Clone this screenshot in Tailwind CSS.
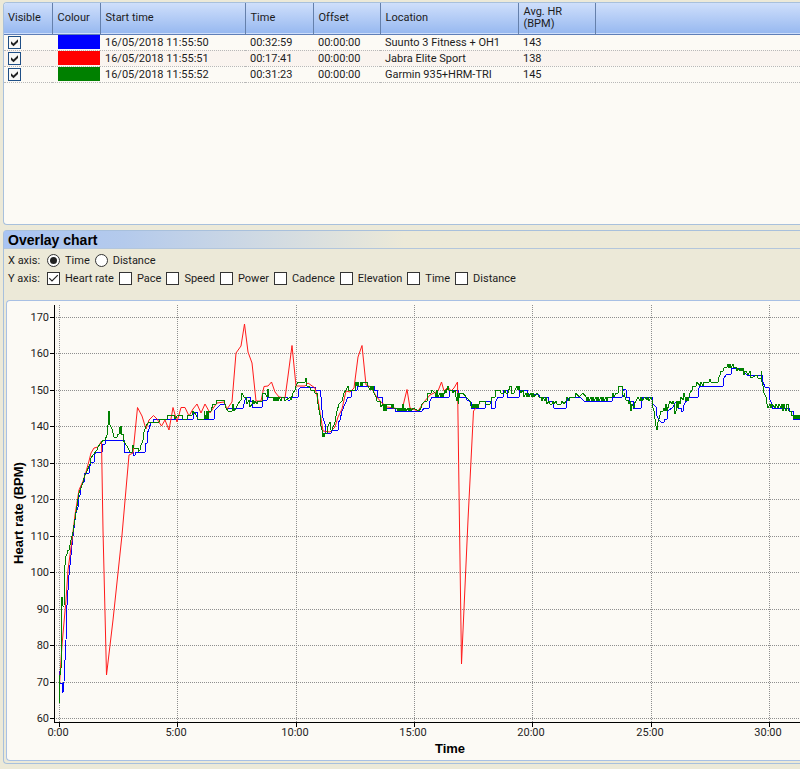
<!DOCTYPE html>
<html lang="en">
<head>
<meta charset="utf-8">
<title>Overlay chart</title>
<script src="https://cdn.jsdelivr.net/npm/@tailwindcss/browser@4"></script>
</head>
<body class="bg-[#ece9d8] font-['Roboto','Liberation_Sans',sans-serif] text-[11px] leading-3 text-[#1c1c1c]">
<main class="flex flex-col gap-[5px] pl-[3px] pt-[2px] min-h-screen overflow-hidden">

  <section class="h-[223px] rounded-l border border-r-0 border-[#a8c0dc] bg-[#fcfaf5] overflow-hidden">
    <table class="w-full table-fixed border-collapse text-left">
      <colgroup>
        <col class="w-[48px]"><col class="w-[48px]"><col class="w-[145px]"><col class="w-[68px]"><col class="w-[67px]"><col class="w-[138px]"><col class="w-[77px]"><col>
      </colgroup>
      <thead>
        <tr class="h-[31px] bg-linear-to-b from-[#cfdffb] to-[#98b9f0] border-b border-[#5f7fb8]">
          <th scope="col" class="border-r border-[#6580ab] pl-1 font-normal">Visible</th>
          <th scope="col" class="border-r border-[#6580ab] pl-[5px] font-normal">Colour</th>
          <th scope="col" class="border-r border-[#6580ab] pl-[5px] font-normal">Start time</th>
          <th scope="col" class="border-r border-[#6580ab] pl-[5px] font-normal">Time</th>
          <th scope="col" class="border-r border-[#6580ab] pl-[5px] font-normal">Offset</th>
          <th scope="col" class="border-r border-[#6580ab] pl-[5px] font-normal">Location</th>
          <th scope="col" class="border-r border-[#6580ab] pl-[5px] font-normal">Avg. HR<br>(BPM)</th>
          <th class="p-0"></th>
        </tr>
      </thead>
      <tbody id="rows"></tbody>
    </table>
  </section>

  <section class="rounded-l border border-r-0 border-[#a8c0dc] bg-[#ece9d8] pb-[2px] mb-[5px]">
    <h2 class="h-[18px] pl-1 border-b border-[#b3c6dc] bg-linear-to-r from-[#a9c4f3] from-0% via-[#b4caec] via-[120px] to-[#ece9d8] to-[400px] font-['Liberation_Sans',sans-serif] text-[14px] leading-[18px] font-bold text-black">Overlay chart</h2>
    <form class="h-[51px] pt-[5px] pl-1 flex flex-col gap-[5px]">
      <div role="radiogroup" aria-label="X axis" class="flex h-[13px] items-center">
        <span class="w-[39px]">X axis:</span>
        <div id="xaxis" class="flex gap-[5px]"></div>
      </div>
      <div role="group" aria-label="Y axis" class="flex h-[13px] items-center">
        <span class="w-[39px]">Y axis:</span>
        <div id="yaxis" class="flex gap-[5px]"></div>
      </div>
    </form>
    <div class="ml-[2px] rounded-l border border-r-0 border-[#a8c0e4] bg-[#fcfaf5] overflow-hidden">
      <svg id="chart" class="block w-full h-[459px]" viewBox="7 301 793 459" preserveAspectRatio="xMinYMin slice" role="img" aria-label="Heart rate over time">
        <g id="grid" stroke="#8e8e8e" stroke-dasharray="1 1" shape-rendering="crispEdges"></g>
        <g id="ticks" stroke="#000" shape-rendering="crispEdges"></g>
        <g fill="none" stroke-width="1" stroke-linejoin="round">
          <polyline stroke="#0000ff" shape-rendering="crispEdges" points="59,671 60,683 62,683 62,692 63,692 64,682 65,660 66,640 67,605 69,575 72,545 74,528 76,513 78,507 78,498 80,495 80,490 82,484 84,482 85,473 89,473 89,469 91,462 94,462 94,455 96,452 102,452 103,444 105,444 105,440 124,440 124,452 133,452 133,455 135,455 135,452 145,452 145,443 147,443 147,434 149,429 151,422 153,422 153,419 193,419 193,412 197,412 197,419 214,419 214,411 217,408 221,404 225,404 226,408 243,408 245,400 247,397 250,397 250,401 252,401 252,407 262,407 262,400 267,400 267,397 287,397 288,400 290,400 290,397 298,397 298,390 301,387 315,387 316,390 320,390 321,397 322,410 323,418 325,424 326,433 331,433 331,430 338,430 338,423 340,420 342,411 345,404 348,397 351,397 352,390 357,390 357,386 374,386 374,390 377,390 377,397 382,397 382,404 386,404 386,408 395,408 395,411 422,411 424,408 429,408 430,401 432,397 449,397 450,390 458,390 459,397 466,397 467,400 471,402 471,408 485,408 486,401 491,401 491,408 495,408 496,401 498,397 503,397 503,390 507,390 507,397 519,397 519,390 527,390 528,394 538,394 540,397 548,397 549,401 553,401 553,405 554,408 566,408 567,401 570,397 580,397 584,401 612,401 613,397 622,397 622,393 624,389 626,390 626,397 629,397 630,401 633,401 633,408 641,408 641,401 643,397 652,397 653,404 656,407 656,414 659,420 661,422 664,422 665,419 667,419 668,411 673,407 675,403 677,402 678,408 681,408 681,411 683,411 684,405 687,400 690,397 698,397 699,388 700,386 723,386 724,378 727,374 731,374 731,368 742,368 744,372 747,375 762,375 763,382 765,387 769,388 770,400 772,404 772,408 789,408 790,411 793,411 793,419 800,419"/>
          <polyline stroke="#ff1a1a" points="59.5,684 60.5,668 62,645 66,600 68,570 72,540 75,515 79,490 83,481 86,472 89,461 91,453 94,448 98,447 101.5,441 103,530 106.5,675 113,620 122,535 129,455 133,453 137.5,407.5 142,416 146,429 149,420 153.5,415.5 157,419 161.5,426 165,420 169,430 173,407.5 177,422 181,407.5 185,407.5 189,416 193,409 197,404 201,413 205,404 210,413 214,407 217,403 224,402 227,409 232,402 236,353 241,346 244.5,324 248,352 252,363 256,401 261,401 264,386.5 268,386 271.5,382 275,392 279,397 285,398 288,376 292,345.5 296,386 305,386 308,383 315,388 318,400 323,431 330,432 335,427 338,417 342,409 346,391 350,392 354,388 358,357 362,345.5 366,385 371,387 376,396 381,402 387,407 394,408 402,410 407,389.5 410,408 418,411 424,402 430,395 438,391 441.5,382 444,391 448,387 451,391 454,388 457.5,382 459,490 461.5,664 468,520 473.5,411 476,408 480,403"/>
          <polyline stroke="#008000" shape-rendering="crispEdges" points="59,704 60,675 61,668 61,610 62,597 63,606 64,606 65,565 65,558 67,554 67,550 69,550 71,540 73,532 76,512 79,493 82,485 85,475 86,473 90,464 90,460 93,455 97,450 98,447 101,443 103,440 105,440 107,435 108,425 109,411 110,425 112,429 114,437 117,437 118,434 119,434 119,427 120,434 121,426 121,434 123,434 123,440 125,443 128,448 130,452 132,452 132,448 133,445 134,448 138,448 138,452 140,450 140,448 143,440 144,432 146,426 149,422 159,422 160,419 167,419 168,415 174,415 175,419 178,415 182,415 183,419 187,419 187,415 192,415 193,411 196,415 198,419 204,419 204,411 206,419 207,411 208,419 209,411 211,411 213,404 216,404 217,400 224,400 226,408 228,411 232,411 233,404 234,411 236,408 238,404 241,400 242,393 244,397 246,397 247,404 249,400 250,407 252,404 253,400 254,404 255,401 257,404 258,401 262,401 263,393 265,393 267,397 268,389 269,397 273,397 274,401 275,397 276,401 277,397 278,401 279,397 281,401 282,397 284,397 285,401 290,397 291,400 293,393 295,390 296,386 298,382 305,382 306,378 307,386 309,386 311,390 314,390 315,393 317,393 318,404 320,415 321,426 322,430 323,437 324,433 324,437 325,433 327,433 328,426 330,422 331,430 332,430 335,422 337,411 339,404 342,401 344,393 346,390 348,386 348,390 355,390 356,382 357,386 358,382 359,386 360,386 361,382 362,386 363,382 367,382 368,386 370,390 371,386 372,390 373,386 374,393 376,397 377,401 380,401 381,407 383,404 384,411 385,404 386,411 386,404 391,404 392,408 393,404 394,408 397,408 398,411 399,408 400,411 401,408 402,411 403,404 404,411 405,408 406,411 408,408 409,411 410,408 411,411 413,408 419,411 421,408 422,404 425,401 427,401 428,393 431,393 432,390 435,393 436,397 437,390 438,397 440,393 441,397 442,393 443,397 445,390 446,393 448,386 449,390 452,390 453,393 455,390 456,397 457,401 458,393 458,404 460,393 463,393 466,397 470,401 470,404 472,408 473,404 474,408 475,404 476,408 477,404 478,408 479,404 480,401 485,401 486,404 490,404 491,401 492,397 495,397 496,390 500,390 501,393 504,393 505,390 506,393 508,393 510,386 511,386 511,393 514,393 515,390 517,386 518,390 519,386 520,390 521,393 523,390 524,397 526,393 527,397 528,393 529,397 531,393 532,397 533,393 534,397 537,393 539,397 541,397 542,401 543,397 545,401 546,397 547,404 549,401 550,404 552,404 553,401 554,404 556,401 557,404 561,404 562,401 564,404 566,401 567,397 569,401 570,397 575,397 576,393 579,397 583,393 586,397 587,401 588,397 589,401 591,397 592,401 593,397 594,401 596,397 597,401 598,397 599,401 601,397 602,401 603,397 604,401 606,397 607,401 608,397 612,397 613,393 614,397 616,393 618,393 618,390 619,386 622,386 622,393 624,397 624,393 626,400 628,400 629,404 630,401 631,411 632,404 634,408 634,404 636,401 638,397 640,401 641,397 642,401 645,397 647,400 648,397 649,401 651,397 652,400 653,408 654,411 655,419 656,426 657,430 658,422 659,419 660,415 661,411 663,411 664,408 665,411 666,404 667,411 669,404 670,401 672,404 673,401 674,404 675,414 676,411 677,401 678,408 679,401 680,404 681,397 683,400 684,393 686,401 687,397 688,401 689,397 690,393 692,390 693,386 696,386 697,382 700,386 701,382 703,386 704,382 709,382 710,379 711,382 718,382 718,379 720,375 721,371 723,371 724,368 727,367 728,364 729,368 730,364 731,368 733,364 734,368 736,367 737,371 738,368 740,371 741,368 742,371 743,368 744,375 745,371 746,371 748,375 750,371 751,378 757,375 758,378 761,378 761,371 762,382 763,386 764,393 766,397 767,404 768,408 770,404 771,408 772,404 775,408 776,404 778,408 779,404 781,408 782,404 783,411 784,404 785,408 786,411 787,404 788,404 789,411 791,411 791,415 793,415 794,419 795,415 796,419 797,415 798,419 799,415 800,419"/>
        </g>
        <g id="axis-labels" fill="#1c1c1c" font-size="11"></g>
        <g class="font-['Liberation_Sans',sans-serif] font-bold" font-size="13" fill="#000">
          <text text-anchor="middle" x="450" y="753">Time</text>
          <text text-anchor="middle" transform="translate(23 513) rotate(-90)">Heart rate (BPM)</text>
        </g>
      </svg>
    </div>
  </section>
</main>

<script>
const records = [
  ["#0000ff", "16/05/2018 11:55:50", "00:32:59", "00:00:00", "Suunto 3 Fitness + OH1", "143"],
  ["#ff0000", "16/05/2018 11:55:51", "00:17:41", "00:00:00", "Jabra Elite Sport", "138"],
  ["#008000", "16/05/2018 11:55:52", "00:31:23", "00:00:00", "Garmin 935+HRM-TRI", "145"]
];
document.getElementById("rows").innerHTML = records.map(([colour, ...cells]) => `
  <tr class="h-4 leading-[15px] border-b border-dotted border-[#b8b8b8] even:bg-[#faf4ef]">
    <td class="p-0 pl-1"><span class="grid size-[13px] place-items-center">
      <input type="checkbox" checked aria-label="Show ${cells[3]}" class="col-start-1 row-start-1 size-[13px] appearance-none border border-[#1f4f86] bg-[#f8f8f6]">
      <svg class="col-start-1 row-start-1 size-[9px] pointer-events-none" viewBox="0 0 9 9"><path d="M1 3.2 3.5 5.6 8 1.2V4L3.5 8.3 1 5.9z" fill="#222"/></svg>
    </span></td>
    <td class="p-0 pl-[6px]"><div class="h-[14px]" style="background:${colour}"></div></td>
    ${cells.map(c => `<td class="p-0 pl-[5px] whitespace-nowrap">${c}</td>`).join("")}
    <td class="p-0"></td>
  </tr>`).join("");

document.getElementById("xaxis").innerHTML = ["Time", "Distance"].map((name, i) => `
  <label class="flex items-center gap-[5px]"><span class="grid size-[13px] place-items-center">
    <input type="radio" name="x" ${i ? "" : "checked"} class="peer col-start-1 row-start-1 size-[13px] appearance-none rounded-full border border-[#333] bg-white">
    <span class="col-start-1 row-start-1 size-[7px] rounded-full bg-[#222] invisible peer-checked:visible pointer-events-none"></span>
  </span>${name}</label>`).join("");

document.getElementById("yaxis").innerHTML = ["Heart rate", "Pace", "Speed", "Power", "Cadence", "Elevation", "Time", "Distance"].map((name, i) => `
  <label class="flex items-center gap-[5px]"><span class="grid size-[13px] place-items-center">
    <input type="checkbox" name="y" ${i ? "" : "checked"} class="peer col-start-1 row-start-1 size-[13px] appearance-none border border-[#333] bg-white">
    <svg class="col-start-1 row-start-1 size-[11px] invisible peer-checked:visible pointer-events-none" viewBox="0 0 11 11"><path d="M1.2 5.2 4 8 9.8 2.2" fill="none" stroke="#222" stroke-width="1.2"/></svg>
  </span>${name}</label>`).join("");

let grid = "", ticks = '<path d="M54.5 305V723M54 722.5H800"/>', labels = "";
for (let v = 60; v <= 170; v += 10) {
  const y = Math.round(718 - (v - 60) * 3.65);
  grid += `<path d="M56 ${y + .5}H800"/>`;
  ticks += `<path d="M50 ${y + .5}H54"/>`;
  labels += `<text text-anchor="end" x="49" y="${y + 4}">${v}</text>`;
}
for (let m = 0; m <= 30; m += 5) {
  const x = Math.round(59 + m * 23.66);
  grid += `<path d="M${x + .5} 305V722"/>`;
  ticks += `<path d="M${x + .5} 722V727"/>`;
  labels += `<text text-anchor="middle" x="${x - 1}" y="736">${m}:00</text>`;
}
document.getElementById("grid").innerHTML = grid;
document.getElementById("ticks").innerHTML = ticks;
document.getElementById("axis-labels").innerHTML = labels;
</script>
</body>
</html>
